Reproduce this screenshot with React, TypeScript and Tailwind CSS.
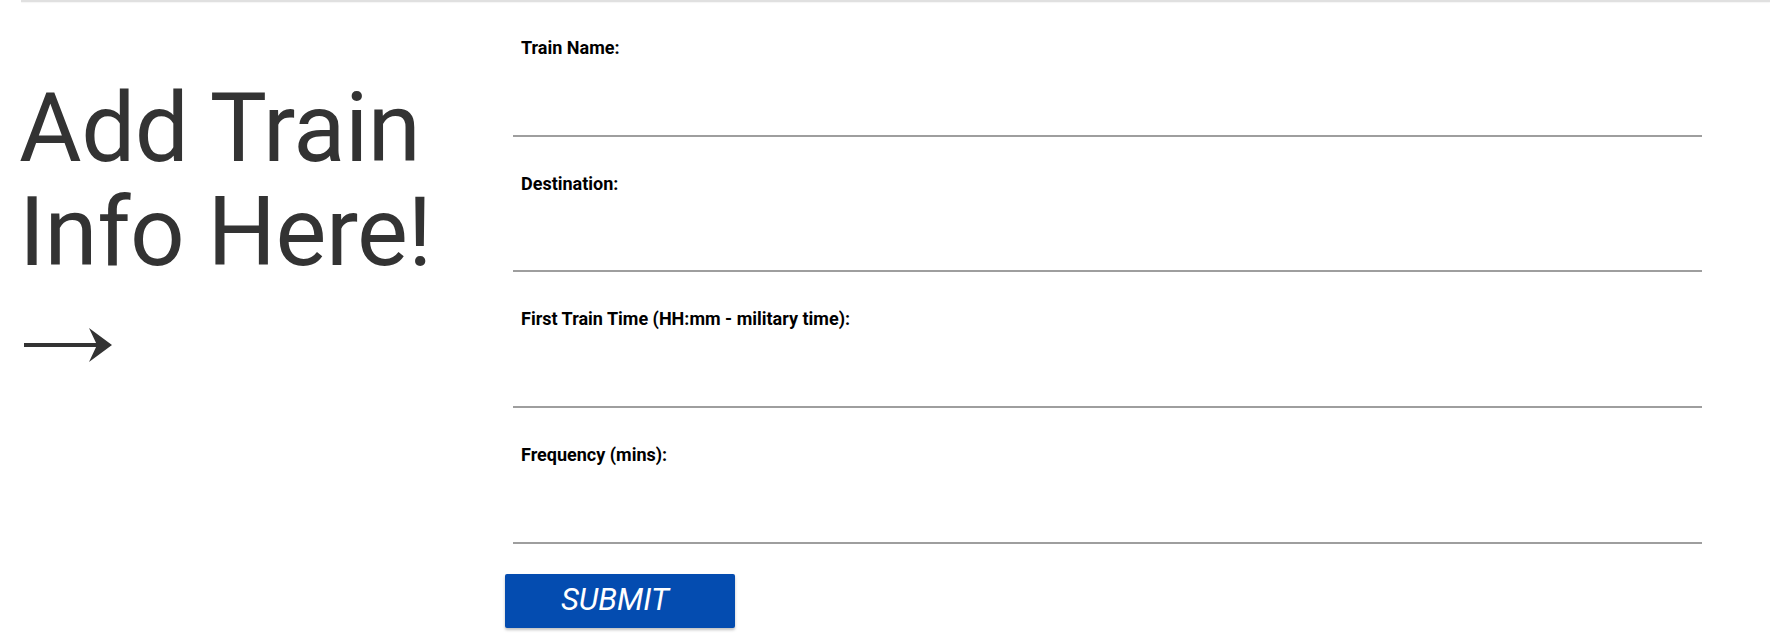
import React from "react";

const fields = [
  "Train Name:",
  "Destination:",
  "First Train Time (HH:mm - military time):",
  "Frequency (mins):",
];

function Arrow() {
  return (
    <svg width="88" height="34" viewBox="0 0 88 34" aria-hidden="true" className="block">
      <rect x="0" y="15" width="76" height="4" fill="#333333" />
      <polygon points="65,0 88,17 65,34 73,17" fill="#333333" />
    </svg>
  );
}

export default function App() {
  return (
    <div className="w-[1770px] min-h-[635px] bg-white font-['Roboto','Liberation_Sans',sans-serif]">
      <div className="ml-[21px] h-[2px] bg-[#e0e0e0] shadow-[0_1px_1px_rgba(0,0,0,0.04)]" />
      <div className="flex">
        <div className="w-[505px] shrink-0 pl-[19px] pt-[74px]">
          <h1 className="text-[96px] leading-[104px] font-normal tracking-[-0.5px] text-[#333333]">
            Add Train
            <br />
            Info Here!
          </h1>
          <div className="mt-[44px] pl-[5px]">
            <Arrow />
          </div>
        </div>
        <div className="w-[1205px] shrink-0">
          <form className="-mt-[1px] px-[8px]" onSubmit={(e) => e.preventDefault()}>
            {fields.map((f) => (
              <div key={f} className="flex h-[135.67px] flex-col border-b-2 border-[#9e9e9e] pt-[36px]">
                <label className="pl-[8px] text-[18px] leading-[22px] font-bold text-black">{f}</label>
                <input className="flex-1 bg-transparent outline-none" type="text" />
              </div>
            ))}
          </form>
          <button
            type="button"
            className="mt-[30px] flex h-[54px] w-[230px] items-center justify-center rounded-[2px] bg-[#044cb0] pr-[10px] text-[31px] italic text-white shadow-[0_2px_3px_rgba(0,0,0,0.25)]"
          >
            SUBMIT
          </button>
        </div>
      </div>
    </div>
  );
}
